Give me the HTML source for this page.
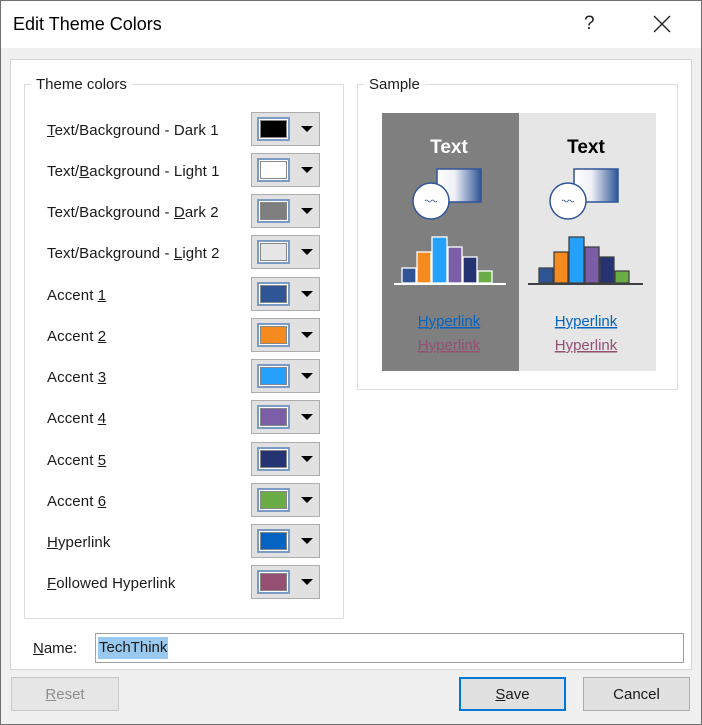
<!DOCTYPE html>
<html><head><meta charset="utf-8"><style>
*{box-sizing:border-box;margin:0;padding:0}
body{width:702px;height:725px;background:#f0f0f0;font-family:"Liberation Sans",sans-serif;font-size:15px;color:#1a1a1a;position:relative;overflow:hidden}
.abs{position:absolute}
#frame{left:0;top:0;width:702px;height:725px;border:1px solid #707070}
#title{left:1px;top:1px;width:700px;height:47px;background:#fff}
#panel{left:10px;top:59px;width:682px;height:611px;background:#fff;border:1px solid #d5d5d5}
.grp{border:1px solid #dcdcdc}
.lg{background:#fff;padding:0 5px}
.lbl{left:47px;white-space:nowrap;letter-spacing:0.1px}
.btn{left:251px;width:69px;height:34px;background:#e1e1e1;border:1px solid #adadad}
.sw{position:absolute;left:5px;top:4px;width:33px;height:24px;border:2px solid #7a9cc4;padding:1px;background:#fff}
.sw i{display:block;width:100%;height:100%;border:1px solid #888}
.arr{position:absolute;left:49px;top:13px;width:0;height:0;border-left:6px solid transparent;border-right:6px solid transparent;border-top:6px solid #000}
.pb{height:34px;background:#e1e1e1;border:1px solid #adadad;text-align:center;line-height:34px;font-size:15px}
u{text-decoration:underline}
</style></head><body>
<div id="title" class="abs"></div>
<div class="abs" style="left:13px;top:14px;font-size:18px;color:#000">Edit Theme Colors</div>
<div class="abs" style="left:584px;top:13px;font-size:19px;color:#222">?</div>
<svg class="abs" style="left:653px;top:15px" width="18" height="18"><path d="M1 1L17 17M17 1L1 17" stroke="#222" stroke-width="1.4"/></svg>
<div id="panel" class="abs"></div>
<div class="abs grp" style="left:24px;top:84px;width:320px;height:535px"></div>
<div class="abs lg" style="left:31px;top:76px">Theme colors</div>
<div class="abs grp" style="left:357px;top:84px;width:321px;height:306px"></div>
<div class="abs lg" style="left:364px;top:76px">Sample</div>

<div class="abs lbl" style="top:122px"><u>T</u>ext/Background - Dark 1</div>
<div class="abs lbl" style="top:163px">Text/<u>B</u>ackground - Light 1</div>
<div class="abs lbl" style="top:204px">Text/Background - <u>D</u>ark 2</div>
<div class="abs lbl" style="top:245px">Text/Background - <u>L</u>ight 2</div>
<div class="abs lbl" style="top:287px">Accent <u>1</u></div>
<div class="abs lbl" style="top:328px">Accent <u>2</u></div>
<div class="abs lbl" style="top:369px">Accent <u>3</u></div>
<div class="abs lbl" style="top:410px">Accent <u>4</u></div>
<div class="abs lbl" style="top:452px">Accent <u>5</u></div>
<div class="abs lbl" style="top:493px">Accent <u>6</u></div>
<div class="abs lbl" style="top:534px"><u>H</u>yperlink</div>
<div class="abs lbl" style="top:575px"><u>F</u>ollowed Hyperlink</div>

<div class="abs btn" style="top:112px"><div class="sw"><i style="background:#000"></i></div><div class="arr"></div></div>
<div class="abs btn" style="top:153px"><div class="sw"><i style="background:#fff"></i></div><div class="arr"></div></div>
<div class="abs btn" style="top:194px"><div class="sw"><i style="background:#7f7f7f"></i></div><div class="arr"></div></div>
<div class="abs btn" style="top:235px"><div class="sw"><i style="background:#e7e6e6"></i></div><div class="arr"></div></div>
<div class="abs btn" style="top:277px"><div class="sw"><i style="background:#2f5597"></i></div><div class="arr"></div></div>
<div class="abs btn" style="top:318px"><div class="sw"><i style="background:#f58a1f"></i></div><div class="arr"></div></div>
<div class="abs btn" style="top:359px"><div class="sw"><i style="background:#25a0fb"></i></div><div class="arr"></div></div>
<div class="abs btn" style="top:400px"><div class="sw"><i style="background:#7b5ea7"></i></div><div class="arr"></div></div>
<div class="abs btn" style="top:442px"><div class="sw"><i style="background:#263373"></i></div><div class="arr"></div></div>
<div class="abs btn" style="top:483px"><div class="sw"><i style="background:#6aac45"></i></div><div class="arr"></div></div>
<div class="abs btn" style="top:524px"><div class="sw"><i style="background:#0563c1"></i></div><div class="arr"></div></div>
<div class="abs btn" style="top:565px"><div class="sw"><i style="background:#954f72"></i></div><div class="arr"></div></div>

<svg class="abs" style="left:382px;top:113px" width="274" height="258" font-family="Liberation Sans,sans-serif">
<defs><linearGradient id="g" x1="0" x2="1"><stop offset="0" stop-color="#fff"/><stop offset="0.4" stop-color="#eef0f6"/><stop offset="1" stop-color="#2f5597"/></linearGradient></defs>
<rect x="0" y="0" width="137" height="258" fill="#7f7f7f"/>
<rect x="137" y="0" width="137" height="258" fill="#e7e6e6"/>
<text x="67" y="40" fill="#fff" font-size="19" font-weight="bold" text-anchor="middle">Text</text>
<text x="204" y="40" fill="#000" font-size="19" font-weight="bold" text-anchor="middle">Text</text>
<g id="sh"><rect x="55" y="56" width="44" height="33" fill="url(#g)" stroke="#2f5597" stroke-width="1.5"/>
<circle cx="49" cy="88" r="18" fill="#fff" stroke="#2f5597" stroke-width="1.5"/>
<path d="M43 88q1.5-2 3 0t3 0t3 0t3 0" stroke="#2f5597" fill="none" stroke-width="0.8"/></g>
<use href="#sh" x="137"/>
<g stroke="#fff" stroke-width="1.3">
<rect x="20" y="155" width="14" height="15" fill="#2f5597"/>
<rect x="35" y="139" width="14" height="31" fill="#f58a1f"/>
<rect x="50" y="124" width="15" height="46" fill="#25a0fb"/>
<rect x="66" y="134" width="14" height="36" fill="#7b5ea7"/>
<rect x="81" y="144" width="14" height="26" fill="#263373"/>
<rect x="96" y="158" width="14" height="12" fill="#6aac45"/></g>
<rect x="12" y="170" width="112" height="2" fill="#fff"/>
<g stroke="#404040" stroke-width="1.3">
<rect x="157" y="155" width="14" height="15" fill="#2f5597"/>
<rect x="172" y="139" width="14" height="31" fill="#f58a1f"/>
<rect x="187" y="124" width="15" height="46" fill="#25a0fb"/>
<rect x="203" y="134" width="14" height="36" fill="#7b5ea7"/>
<rect x="218" y="144" width="14" height="26" fill="#263373"/>
<rect x="233" y="158" width="14" height="12" fill="#6aac45"/></g>
<rect x="146" y="170" width="115" height="2" fill="#404040"/>
<text x="67" y="213" fill="#0563c1" font-size="15" text-anchor="middle" text-decoration="underline">Hyperlink</text>
<text x="67" y="237" fill="#954f72" font-size="15" text-anchor="middle" text-decoration="underline">Hyperlink</text>
<text x="204" y="213" fill="#0563c1" font-size="15" text-anchor="middle" text-decoration="underline">Hyperlink</text>
<text x="204" y="237" fill="#954f72" font-size="15" text-anchor="middle" text-decoration="underline">Hyperlink</text>
</svg>

<div class="abs" style="left:33px;top:640px"><u>N</u>ame:</div>
<div class="abs" style="left:95px;top:633px;width:589px;height:30px;border:1px solid #a0a0a0;background:#fff"></div>
<div class="abs" style="left:98px;top:637px;height:22px;line-height:22px;background:#99c9ef;padding:0 1px">TechThink</div>

<div class="abs pb" style="left:11px;top:677px;width:108px;color:#8d8d8d;border-color:#c8c8c8;background:#e6e6e6"><u>R</u>eset</div>
<div class="abs pb" style="left:459px;top:677px;width:107px;border:2px solid #0078d7;line-height:32px"><u>S</u>ave</div>
<div class="abs pb" style="left:583px;top:677px;width:107px">Cancel</div>
<div id="frame" class="abs"></div>
</body></html>
